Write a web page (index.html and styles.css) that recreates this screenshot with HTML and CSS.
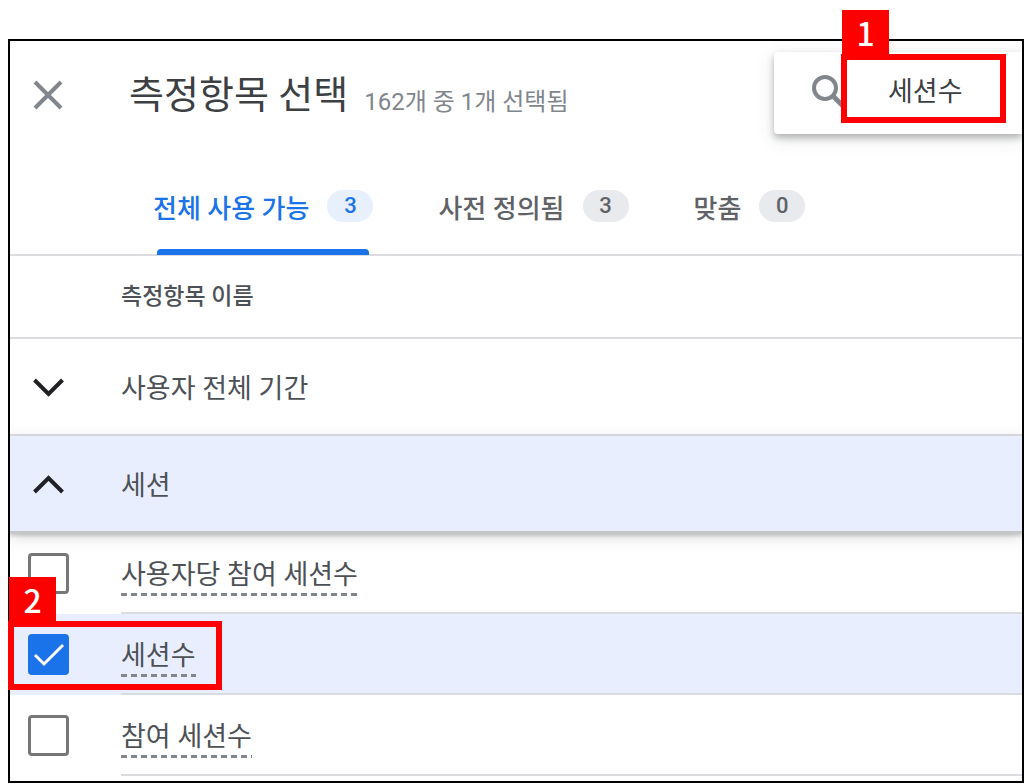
FILE: index.html
```
<!DOCTYPE html>
<html lang="ko">
<head>
    <meta charset="UTF-8">
    <meta name="viewport" content="width=device-width, initial-scale=1.0">
    <title>측정항목 선택</title>
    <link rel="stylesheet" href="styles.css">
</head>
<body>
    <main class="panel">
        <header class="panel-header">
            <button class="close" type="button" aria-label="닫기">
                <svg width="30" height="30" viewBox="0 0 30 30"><path d="M2 2L28 28M28 2L2 28" fill="none" stroke="#80868b" stroke-width="4"/></svg>
            </button>
            <h1>측정항목 선택</h1>
            <p class="count">162개 중 1개 선택됨</p>
            <div class="search">
                <svg class="search-icon" width="36" height="36" viewBox="0 0 36 36"><circle cx="15" cy="13" r="11" fill="none" stroke="#80868b" stroke-width="4"/><path d="M23 21L34 32" stroke="#80868b" stroke-width="5"/></svg>
                <span class="callout callout-search"><b class="callout-number">1</b></span>
                <input class="search-input" type="text" value="세션수" aria-label="측정항목 검색">
            </div>
        </header>

        <nav class="tabs">
            <button class="tab active" type="button">전체 사용 가능 <span class="badge">3</span></button>
            <button class="tab" type="button">사전 정의됨 <span class="badge">3</span></button>
            <button class="tab" type="button">맞춤 <span class="badge">0</span></button>
        </nav>

        <h2 class="column-title">측정항목 이름</h2>

        <button class="group" type="button" aria-expanded="false">
            <svg class="chevron" width="34" height="24" viewBox="0 0 34 24"><path d="M3 5L17 19L31 5" fill="none" stroke="#202124" stroke-width="4"/></svg>
            사용자 전체 기간
        </button>
        <button class="group open" type="button" aria-expanded="true">
            <svg class="chevron" width="34" height="24" viewBox="0 0 34 24"><path d="M3 20L17 6L31 20" fill="none" stroke="#202124" stroke-width="4"/></svg>
            세션
        </button>

        <ul class="metrics">
            <li class="metric">
                <input type="checkbox" id="engaged-per-user">
                <div class="metric-name"><label for="engaged-per-user">사용자당 참여 세션수</label></div>
            </li>
            <li class="metric selected">
                <input type="checkbox" id="sessions" checked>
                <div class="metric-name"><label for="sessions">세션수</label></div>
                <span class="callout callout-metric"><b class="callout-number">2</b></span>
            </li>
            <li class="metric">
                <input type="checkbox" id="engaged">
                <div class="metric-name"><label for="engaged">참여 세션수</label></div>
            </li>
        </ul>
    </main>
</body>
</html>
```

FILE: styles.css
```
* {
    box-sizing: border-box;
}

body {
    margin: 0;
    padding: 39px 0 0 8px;
    background-color: #fff;
    color: #4d5156;
    font-family: Roboto, "Noto Sans CJK KR", sans-serif;
    font-size: 27px;
}

h1, h2, p, ul {
    margin: 0;
    padding: 0;
    font-weight: 400;
}

button {
    padding: 0;
    border: none;
    background: none;
    color: inherit;
    font: inherit;
    cursor: pointer;
}

svg {
    display: block;
    flex: none;
}

.panel {
    border: 2px solid #000;
    padding-bottom: 5px;
}

/* header */
.panel-header {
    display: flex;
    align-items: center;
    padding: 11px 0;
}

.close {
    margin: 0 66px 0 23px;
    padding-top: 4px;
}

h1 {
    padding-top: 4px;
    color: #3c4043;
    font-size: 38px;
    line-height: 56px;
    white-space: nowrap;
}

.count {
    margin-left: 16px;
    padding-top: 12px;
    color: #80868b;
    font-size: 24px;
    white-space: nowrap;
}

.search {
    position: relative;
    display: flex;
    align-items: center;
    width: 248px;
    height: 82px;
    margin-left: auto;
    padding-left: 36px;
    border-radius: 4px 0 0 4px;
    background-color: #fff;
    box-shadow: 0 4px 7px rgba(60, 64, 67, 0.35), 0 4px 20px rgba(60, 64, 67, 0.12);
    clip-path: inset(-42px 0 -30px -30px);
}

.search-input {
    position: relative;
    width: 110px;
    margin-left: 42px;
    padding: 0 0 8px;
    border: none;
    outline: none;
    background: none;
    color: #3c4043;
    font: inherit;
}

/* tabs */
.tabs {
    display: flex;
    gap: 65px;
    height: 98px;
    margin-top: 13px;
    padding-left: 143px;
    border-bottom: 2px solid #dadce0;
}

.tab {
    position: relative;
    display: flex;
    align-items: center;
    gap: 18px;
    color: #5f6368;
    font-size: 26px;
    font-weight: 500;
    white-space: nowrap;
}

.tab.active {
    color: #1a73e8;
}

.tab.active::after {
    content: "";
    position: absolute;
    left: 4px;
    right: 4px;
    bottom: -1px;
    height: 6px;
    border-radius: 4px 4px 0 0;
    background-color: #1a73e8;
}

.badge {
    width: 46px;
    border-radius: 16px;
    background-color: #e8eaed;
    font-size: 22px;
    line-height: 32px;
    text-align: center;
}

.active .badge {
    background-color: #e8f0fe;
}

/* list */
.column-title {
    padding-left: 111px;
    border-bottom: 2px solid #dadce0;
    font-size: 23px;
    font-weight: 500;
    line-height: 81px;
}

.group {
    display: flex;
    align-items: center;
    gap: 55px;
    width: 100%;
    height: 97px;
    padding-left: 21px;
    padding-right: 21px;
    border-bottom: 2px solid #dadce0;
    text-align: left;
}

.chevron {
    width: 35px;
}

.group.open {
    position: relative;
    border-bottom-color: #c4c6ca;
    background-color: #e8eefd;
    box-shadow: 0 3px 3px rgba(60, 64, 67, 0.2), 0 4px 14px rgba(60, 64, 67, 0.2);
    clip-path: inset(-12px 0 -24px 0);
}

.metrics {
    list-style: none;
}

.metric {
    position: relative;
    display: flex;
    align-items: center;
    gap: 52px;
    padding-left: 18px;
}

.metric.selected {
    background-color: #e8eefd;
}

.metric-name {
    flex: 1;
    display: flex;
    align-items: center;
    height: 81px;
    padding-top: 4px;
    border-bottom: 2px solid #dadce0;
}

.metric-name label {
    background: repeating-linear-gradient(90deg, #80868b 0 6px, transparent 6px 10px) left bottom / 100% 3px no-repeat;
    line-height: 42px;
}

.metric input {
    appearance: none;
    flex: none;
    width: 41px;
    height: 41px;
    margin: 0;
    border: 3px solid #757779;
    border-radius: 4px;
}

.metric input:checked {
    border: none;
    background: #1a73e8 url("data:image/svg+xml,%3Csvg xmlns='http://www.w3.org/2000/svg' viewBox='0 0 41 41'%3E%3Cpath d='M7 21L16 30L35 11' fill='none' stroke='%23fff' stroke-width='3'/%3E%3C/svg%3E");
}

/* red step markers */
.callout {
    position: absolute;
    border: 6px solid #f00;
}

.callout-search {
    top: 2px;
    left: 67px;
    width: 165px;
    height: 69px;
    background-color: #fff;
}

.callout-metric {
    top: 7px;
    left: -2px;
    width: 214px;
    height: 69px;
}

.callout-number {
    position: absolute;
    bottom: 100%;
    left: -5px;
    width: 47px;
    height: 50px;
    background-color: #f00;
    color: #fff;
    font-family: "Noto Sans CJK KR", sans-serif;
    font-size: 32px;
    font-weight: 500;
    line-height: 45px;
    text-align: center;
}
```
